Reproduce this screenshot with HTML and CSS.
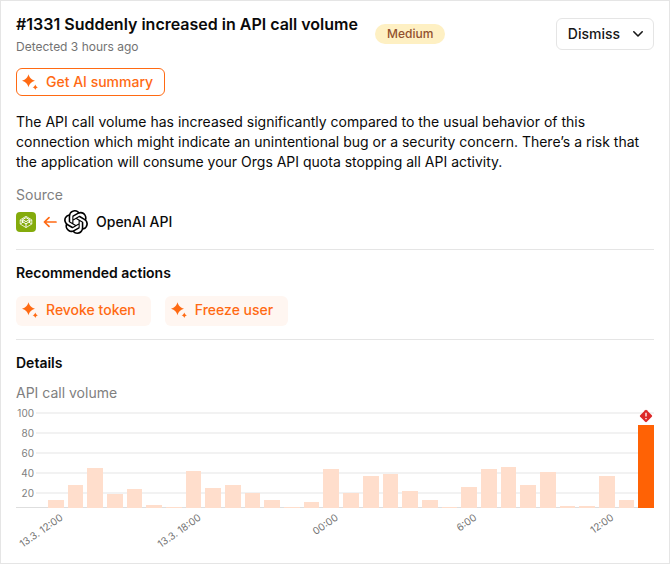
FILE: index.html
```html
<!DOCTYPE html>
<html lang="en">
<head>
<meta charset="utf-8">
<meta name="viewport" content="width=device-width, initial-scale=1">
<title>#1331 Suddenly increased in API call volume</title>
<link rel="stylesheet" href="styles.css">
</head>
<body>
<svg class="defs" aria-hidden="true">
  <symbol id="sparkle" viewBox="0 0 16 16">
    <path d="M6.5 0.2C7.5 3.8 9.1 5.4 13 6.7C9.1 8 7.5 9.6 6.5 13.2C5.5 9.6 3.9 8 0 6.7C3.9 5.4 5.5 3.8 6.5 0.2Z"/>
    <path d="M13.3 10.4C13.8 12.1 14.4 12.7 16 13.2C14.4 13.7 13.8 14.3 13.3 16C12.8 14.3 12.2 13.7 10.6 13.2C12.2 12.7 12.8 12.1 13.3 10.4Z"/>
  </symbol>
</svg>
<main class="card">
  <header class="header">
    <div class="heading">
      <h1 class="title">#1331 Suddenly increased in API call volume</h1>
      <p class="detected">Detected 3 hours ago</p>
    </div>
    <span class="badge">Medium</span>
    <button class="dismiss" type="button" aria-haspopup="menu">Dismiss
      <svg class="chevron" viewBox="0 0 12 12" aria-hidden="true"><path d="M1.8 3.8L6 8L10.2 3.8"/></svg>
    </button>
  </header>

  <button class="action action-outline" type="button"><svg class="sparkle" aria-hidden="true"><use href="#sparkle"/></svg>Get AI summary</button>

  <p class="description">The API call volume has increased significantly compared to the usual behavior of this connection which might indicate an unintentional bug or a security concern. There’s a risk that the application will consume your Orgs API quota stopping all API activity.</p>

  <section class="source">
    <h2 class="label">Source</h2>
    <div class="source-row">
      <svg class="app-icon" viewBox="0 0 20 20" aria-hidden="true">
        <rect width="20" height="20" rx="4" fill="#84ab0c"/>
        <g fill="none" stroke="#fff" stroke-width="1" stroke-linejoin="round">
          <path d="M10 4.3L15.8 7.9V12L10 15.6L4.2 12V7.9Z" opacity=".8"/>
          <path d="M10 5.6L13.4 7.6L10 9.6L6.6 7.6Z"/>
          <path d="M4.4 8.2L10 11.9L15.6 8.2M6.6 7.8V10M13.4 7.8V10M10 12V15.4M4.4 11.9L7.2 10.1M15.6 11.9L12.8 10.1"/>
        </g>
      </svg>
      <svg class="arrow" viewBox="0 0 12 12" aria-hidden="true"><path d="M12 6H0.6M5 1.6L0.4 6L5 10.4"/></svg>
      <svg class="openai" viewBox="0 0 24 24" aria-hidden="true"><path d="M22.2819 9.8211a5.9847 5.9847 0 0 0-.5157-4.9108 6.0462 6.0462 0 0 0-6.5098-2.9A6.0651 6.0651 0 0 0 4.9807 4.1818a5.9847 5.9847 0 0 0-3.9977 2.9 6.0462 6.0462 0 0 0 .7427 7.0966 5.98 5.98 0 0 0 .511 4.9107 6.051 6.051 0 0 0 6.5146 2.9001A5.9847 5.9847 0 0 0 13.2599 24a6.0557 6.0557 0 0 0 5.7718-4.2058 5.9894 5.9894 0 0 0 3.9977-2.9001 6.0557 6.0557 0 0 0-.7475-7.0729zm-9.022 12.6081a4.4755 4.4755 0 0 1-2.8764-1.0408l.1419-.0804 4.7783-2.7582a.7948.7948 0 0 0 .3927-.6813v-6.7369l2.02 1.1686a.071.071 0 0 1 .038.052v5.5826a4.504 4.504 0 0 1-4.4945 4.4944zm-9.6607-4.1254a4.4708 4.4708 0 0 1-.5346-3.0137l.142.0852 4.783 2.7582a.7712.7712 0 0 0 .7806 0l5.8428-3.3685v2.3324a.0804.0804 0 0 1-.0332.0615L9.74 19.9502a4.4992 4.4992 0 0 1-6.1408-1.6464zM2.3408 7.8956a4.485 4.485 0 0 1 2.3655-1.9728V11.6a.7664.7664 0 0 0 .3879.6765l5.8144 3.3543-2.0201 1.1685a.0757.0757 0 0 1-.071 0l-4.8303-2.7865A4.504 4.504 0 0 1 2.3408 7.872zm16.5963 3.8558L13.1038 8.364 15.1192 7.2a.0757.0757 0 0 1 .071 0l4.8303 2.7913a4.4944 4.4944 0 0 1-.6765 8.1042v-5.6772a.79.79 0 0 0-.407-.667zm2.0107-3.0231l-.142-.0852-4.7735-2.7818a.7759.7759 0 0 0-.7854 0L9.409 9.2297V6.8974a.0662.0662 0 0 1 .0284-.0615l4.8303-2.7866a4.4992 4.4992 0 0 1 6.6802 4.66zM8.3065 12.863l-2.02-1.1638a.0804.0804 0 0 1-.038-.0567V6.0742a4.4992 4.4992 0 0 1 7.3757-3.4537l-.142.0805L8.704 5.459a.7948.7948 0 0 0-.3927.6813zm1.0976-2.3654l2.602-1.4998 2.6069 1.4998v2.9994l-2.5974 1.4997-2.6067-1.4997Z"/></svg>
      <span>OpenAI API</span>
    </div>
  </section>

  <section class="section">
    <h2 class="section-title">Recommended actions</h2>
    <div class="actions">
      <button class="action action-soft" type="button"><svg class="sparkle" aria-hidden="true"><use href="#sparkle"/></svg>Revoke token</button>
      <button class="action action-soft" type="button"><svg class="sparkle" aria-hidden="true"><use href="#sparkle"/></svg>Freeze user</button>
    </div>
  </section>

  <section class="section">
    <h2 class="section-title">Details</h2>
    <h3 class="label chart-label">API call volume</h3>
    <div class="chart">
      <div class="scale">
        <div class="tick">100</div>
        <div class="tick">80</div>
        <div class="tick">60</div>
        <div class="tick">40</div>
        <div class="tick">20</div>
      </div>
      <div class="bars" id="bars"></div>
      <div class="times">
        <span class="time"><span>13.3. 12:00</span></span>
        <span class="time"><span>13.3. 18:00</span></span>
        <span class="time"><span>00:00</span></span>
        <span class="time"><span>6:00</span></span>
        <span class="time"><span>12:00</span></span>
      </div>
    </div>
  </section>
</main>
<template id="alert">
  <svg class="alert" viewBox="0 0 14 14" role="img" aria-label="Anomaly"><rect x="2.3" y="2.3" width="9.4" height="9.4" rx="1.2" transform="rotate(45 7 7)" fill="#dc2828"/><path d="M7 3.8V7.6M7 8.9V10.2" stroke="#fff" stroke-width="1.3"/></svg>
</template>
<script src="chart.js"></script>
</body>
</html>
```
FILE: styles.css
```css
* {
  box-sizing: border-box;
}

body {
  margin: 0;
  font: 14px/20px Inter, sans-serif;
  color: #0a0a0a;
  background: #fff;
}

h1, h2, h3, p {
  margin: 0;
}

button {
  font: inherit;
  cursor: pointer;
}

svg {
  flex: none;
}

.defs {
  display: none;
}

.card {
  min-height: 100vh;
  padding: 13px 15px 0;
  border: 1px solid #e5e5e5;
}

.header {
  display: flex;
  align-items: flex-start;
  gap: 17px;
  margin-bottom: 12px;
}

.title {
  font-size: 16px;
  line-height: 20px;
  font-weight: 600;
}

.detected {
  padding-top: 3px;
  font-size: 12px;
  line-height: 19px;
  color: #737373;
}

.badge {
  margin-top: 10px;
  padding: 0 12px;
  border-radius: 10px;
  font-size: 12px;
  font-weight: 500;
  color: #92502e;
  background: #fef0c3;
}

.dismiss {
  display: flex;
  align-items: center;
  gap: 12px;
  height: 32px;
  margin: 4px 0 0 auto;
  padding: 0 9px 0 11px;
  border: 1px solid #e5e5e5;
  border-radius: 6px;
  font-weight: 500;
  color: #171717;
  background: #fff;
}

.chevron {
  width: 12px;
  height: 12px;
  fill: none;
  stroke: #171717;
  stroke-width: 1.6;
  stroke-linecap: round;
  stroke-linejoin: round;
}

.action {
  display: flex;
  align-items: center;
  gap: 8px;
  border: 0;
  border-radius: 6px;
  font-weight: 500;
  color: #ff6a13;
}

.action-outline {
  height: 28px;
  padding: 0 11px 0 5px;
  border: 1px solid #ff6a13;
  background: #fff;
}

.action-soft {
  height: 30px;
  padding: 0 15px 2px 6px;
  background: #fff6f1;
}

.sparkle {
  width: 16px;
  height: 16px;
  fill: #ff6a13;
}

.description {
  margin: 16px 0 13px;
}

.label {
  font-size: 14px;
  font-weight: 400;
  color: #808080;
}

.source-row {
  display: flex;
  align-items: center;
  gap: 8px;
  margin: 5px 0 15px;
  font-weight: 500;
}

.app-icon {
  width: 20px;
  height: 20px;
}

.arrow {
  width: 12px;
  height: 12px;
  overflow: visible;
  fill: none;
  stroke: #ff6a13;
  stroke-width: 1.7;
  stroke-linecap: round;
  stroke-linejoin: round;
}

.openai {
  width: 24px;
  height: 24px;
}

.section {
  padding: 13px 0;
  border-top: 1px solid #e5e5e5;
}

.section-title {
  font-size: 14px;
  font-weight: 600;
}

.actions {
  display: flex;
  gap: 14px;
  margin-top: 13px;
}

.chart-label {
  margin-top: 10px;
}

.chart {
  display: grid;
  grid-template-rows: 105px auto;
}

.scale,
.bars {
  grid-area: 1 / 1;
}

.scale {
  border-bottom: 1px solid #dedede;
}

.tick {
  display: grid;
  grid-template-columns: 18px 1fr;
  gap: 2px;
  align-items: center;
  font-size: 10px;
  text-align: right;
  color: #808080;
}

.tick::after {
  content: "";
  height: 2px;
  background: #f2f2f2;
}

.bars,
.times {
  display: grid;
  grid-template-columns: repeat(31, 1fr);
  column-gap: 4px;
  padding-left: 32px;
}

.bars {
  align-items: end;
}

.bar {
  background: #ffdecc;
}

.bar-peak {
  position: relative;
  background: #ff6205;
}

.alert {
  position: absolute;
  left: calc(50% - 7px);
  bottom: calc(100% + 2px);
  width: 14px;
  height: 14px;
}

.times {
  height: 42px;
  font-size: 10px;
  line-height: 12px;
  color: #737373;
}

.time {
  grid-column: span 7;
  display: grid;
  grid-template-columns: 10px;
  justify-content: start;
  padding-top: 3px;
}

.time:last-child {
  grid-column: span 3;
}

.time span {
  justify-self: end;
  height: 12px;
  white-space: nowrap;
  transform: rotate(-35deg);
  transform-origin: top right;
}
```
FILE: chart.js
```js
const volumes = [8, 23, 40, 14, 19, 3, 1, 37, 20, 23, 15, 8, 1, 6, 39, 15, 32, 34, 17, 8, 1, 21, 39, 41, 23, 36, 2, 2, 32, 8, 83];
const bars = document.getElementById("bars");

volumes.forEach((volume, index) => {
  const bar = document.createElement("div");
  bar.className = "bar";
  bar.style.height = `${volume}px`;
  if (index === volumes.length - 1) {
    bar.classList.add("bar-peak");
    bar.append(document.getElementById("alert").content.cloneNode(true));
  }
  bars.append(bar);
});
```
